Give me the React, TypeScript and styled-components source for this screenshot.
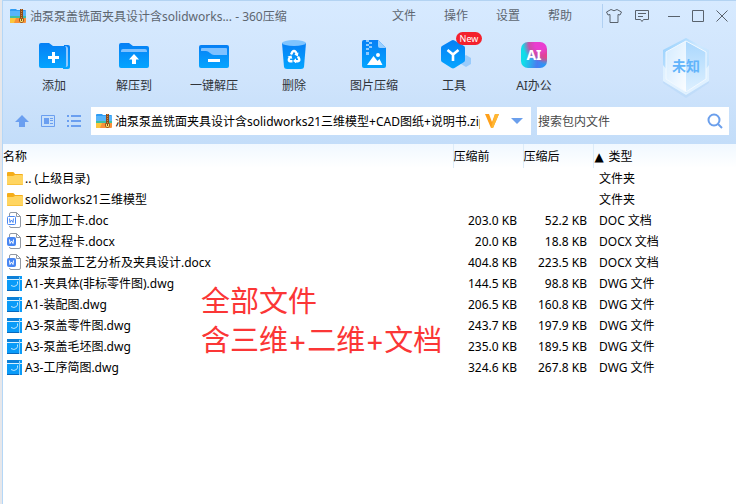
import React from "react";
import styled, { createGlobalStyle } from "styled-components";

const GlobalStyle = createGlobalStyle`
  * { box-sizing: border-box; }
  html, body { margin: 0; background: #e7e7ea; }
  body, button, input {
    font-family: "Noto Sans", "Noto Sans CJK SC", sans-serif;
    font-size: 12px;
  }
`;

const Window = styled.main`
  position: relative;
  display: flex;
  flex-direction: column;
  min-height: 100vh;
  margin-left: 2px;
  border-left: 1px solid #b4d7f7;
  background: #fff;
`;

const Header = styled.header`
  border-top: 1px solid #b3d3f2;
  background: linear-gradient(#d7eaff, #cfe4fc 55%, #c3ddf9);
`;

const TitleBar = styled.div`
  display: flex;
  align-items: center;
  height: 30px;
  padding: 0 6px 0 7px;
`;

const Title = styled.h1`
  flex: 1;
  min-width: 0;
  margin: 0 0 0 3px;
  padding-top: 1px;
  overflow: hidden;
  white-space: nowrap;
  font-size: 12px;
  font-weight: 400;
  line-height: 18px;
  color: #5d6670;
`;

const PlainButton = styled.button`
  display: flex;
  align-items: center;
  justify-content: center;
  padding: 0;
  border: 0;
  background: none;
  color: inherit;
  line-height: 18px;
`;

const Menu = styled.nav`
  display: flex;
  margin-right: 16px;
  color: #5d6670;
`;

const MenuButton = styled(PlainButton)`
  width: 52px;
`;

const WindowControls = styled.div`
  display: flex;
  align-items: center;
  height: 24px;
  padding-left: 3px;
  border-left: 1px solid #b0d0f2;
`;

const ControlButton = styled(PlainButton)<{ $gap?: number }>`
  width: 16px;
  height: 20px;
  margin-left: ${(p) => p.$gap ?? 8}px;
`;

const Toolbar = styled.div`
  display: flex;
  align-items: flex-start;
  justify-content: space-between;
  height: 76px;
  padding: 6px 26px 0 11px;
`;

const Tools = styled.div`
  display: flex;
`;

const ToolButton = styled(PlainButton)`
  position: relative;
  flex-direction: column;
  justify-content: flex-start;
  gap: 4px;
  width: 80px;
  color: #30343a;
`;

const NewBadge = styled.span`
  position: absolute;
  top: -5px;
  left: 42px;
  width: 26px;
  border-radius: 7px;
  background: #f4212d;
  color: #fff;
  font-size: 9px;
  line-height: 13px;
`;

const AiTile = styled.span`
  width: 26px;
  height: 26px;
  margin: 5px 0;
  border-radius: 7px;
  background:
    radial-gradient(circle at 75% 8%, #e93ed0 0 18%, #e0409cdd 38%, transparent 58%),
    radial-gradient(circle at 100% 45%, #f4476c 0 10%, transparent 38%),
    linear-gradient(100deg, #10dde9 20%, #4a7df0 65%, #1aa3fb);
  color: #fff;
  font-size: 14px;
  font-weight: 700;
  line-height: 26px;
`;

const StatusBadge = styled.div`
  display: grid;
  width: 48px;
  height: 62px;
  place-items: center;
  > * { grid-area: 1 / 1; }
`;

const StatusText = styled.span`
  padding-bottom: 4px;
  color: #62b4fb;
  font-size: 14px;
  font-weight: 700;
  line-height: 20px;
`;

const AddressBar = styled.div`
  display: flex;
  align-items: center;
  height: 37px;
  padding: 0 7px 9px 10px;
`;

const NavButton = styled(PlainButton)`
  width: 18px;
  height: 20px;
  margin-right: 8px;
`;

const Field = styled.div<{ $grow: number }>`
  display: flex;
  flex: ${(p) => p.$grow} 1 0;
  align-items: center;
  min-width: 0;
  height: 28px;
  background: #fff;
  & + & { margin-left: 6px; }
`;

const AddressIcon = styled.span`
  display: flex;
  margin-left: 5px;
`;

const TextInput = styled.input`
  flex: 1;
  min-width: 0;
  height: 28px;
  padding: 0 1px;
  border: 0;
  outline: 0;
  background: transparent;
  color: #000;
  &::placeholder { color: #484848; opacity: 1; }
`;

const AddressInput = styled(TextInput)`
  margin: 0 4px 0 1px;
`;

const ArrowButton = styled(PlainButton)`
  width: 32px;
  height: 28px;
  padding-left: 4px;
`;

const SearchButton = styled(PlainButton)`
  width: 28px;
  height: 28px;
`;

const FileTable = styled.table`
  width: 100%;
  table-layout: fixed;
  border-collapse: collapse;
  color: #000;
  line-height: 21px;
  white-space: nowrap;
`;

const HeadRow = styled.tr`
  height: 24px;
  background: linear-gradient(#f0f8ff, #fff);
`;

const HeadCell = styled.th<{ $divided?: boolean }>`
  padding: 0;
  border-left: ${(p) => (p.$divided ? "1px solid #dcecf9" : "0")};
  text-align: left;
  font-weight: 400;
`;

const SortMark = styled.span`
  display: inline-block;
  width: 15px;
  padding-left: 1px;
  font-family: "DejaVu Sans", sans-serif;
  line-height: 18px;
`;

const Cell = styled.td<{ $numeric?: boolean }>`
  height: 21px;
  padding: 0 6px;
  text-align: ${(p) => (p.$numeric ? "right" : "left")};
`;

const NameCell = styled(Cell)`
  padding: 0 0 0 4px;
`;

const FileName = styled.span`
  display: flex;
  align-items: center;
  gap: 1px;
  height: 21px;
`;

const Annotation = styled.p`
  position: absolute;
  top: 282px;
  left: 198px;
  margin: 0;
  color: #fb3636;
  font-family: Inter, "Noto Sans CJK SC", sans-serif;
  font-size: 29px;
  line-height: 39px;
  white-space: pre-line;
  pointer-events: none;
`;

const ZipIcon = () => (
  <svg width="17" height="16" viewBox="0 0 17 16" aria-hidden="true">
    <path d="M0 2q0-1 1-1h5l1 1h8q1 0 1 1v4H0z" fill="#2f9cf3" />
    <path d="M0 3h16v5H0z" fill="#56b4fa" />
    <path d="M0 8h16v2H0z" fill="#3fbfa0" />
    <path d="M0 10h16v4q0 1-1 1H1q-1 0-1-1z" fill="#f9913a" />
    <path d="M0 10h6l-2 5H1q-1 0-1-1z" fill="#fbc63c" />
    <path d="M10 1h3v9h-3z" fill="#8a4a1d" />
    <path d="M11.500 1v9" stroke="#d08a3e" strokeDasharray="1 1" />
    <path d="M9.500 10.500h4V13l-1 1.500h-2l-1-1.500z" fill="#fbe070" stroke="#9b5a1d" />
    <path d="M11.500 11v2" stroke="#7b4315" />
  </svg>
);

const BlueGradient = ({ id }: { id: string }) => (
  <defs>
    <linearGradient id={id} x1="0" y1="0" x2="0" y2="1">
      <stop offset="0" stopColor="#067ff5" />
      <stop offset="1" stopColor="#04a5ff" />
    </linearGradient>
  </defs>
);

const ToolSvg = ({ id, children }: { id: string; children: React.ReactNode }) => (
  <svg width="36" height="36" viewBox="0 0 36 36" aria-hidden="true">
    <BlueGradient id={id} />
    {children}
  </svg>
);

const AddIcon = () => (
  <ToolSvg id="g-add">
    <path d="M28 8h4q2 0 2 2v20q0 2-2 2h-5z" fill="url(#g-add)" />
    <path d="M29 9q3 0 3 3v16q0 2-3 2z" fill="#8fc9ff" />
    <path d="M3 8q0-2 2-2h8l4 3h11q2 0 2 2v18q0 2-2 2H5q-2 0-2-2z" fill="url(#g-add)" />
    <path d="M17.500 15v11M12 20.500h11" stroke="#fff" strokeWidth="3" />
  </ToolSvg>
);

const ExtractIcon = () => (
  <ToolSvg id="g-ext">
    <path d="M3 8q0-2 2-2h8l4 3h14q2 0 2 2v18q0 2-2 2H5q-2 0-2-2z" fill="url(#g-ext)" />
    <path d="M5 15v-1q0-2 2-2h22q2 0 2 2v1z" fill="#7fc1ff" />
    <path d="m18 17 5 5.500h-3V27h-4v-4.500h-3z" fill="#fff" />
  </ToolSvg>
);

const OneKeyIcon = () => (
  <ToolSvg id="g-one">
    <rect x="3" y="8" width="30" height="23" rx="2" fill="url(#g-one)" />
    <path d="M5 14v-2q0-1 1-1h24q1 0 1 1v6H18q-2 0-4-2-2-2-4-2z" fill="#7fc1ff" />
    <path d="M12 23.500h12" stroke="#fff" strokeWidth="3" />
  </ToolSvg>
);

const DeleteIcon = () => (
  <ToolSvg id="g-del">
    <path d="M6 6h24l-2 24q-.2 2-3 2H11q-2.800 0-3-2z" fill="url(#g-del)" />
    <ellipse cx="18" cy="6" rx="12" ry="3" fill="#7fc4ff" />
    <g fill="none" stroke="#fff" strokeWidth="2.400">
      <path d="m15 17.500 1.500-2.700q1.500-1.800 3 0l1.300 2" />
      <path d="m22 19.500 1.200 2.500q.6 2-1.500 2.300H19" />
      <path d="M16.500 24.300h-2q-2.300-.3-1.500-2.500l1.200-2" />
    </g>
    <path d="m22.500 15.500-.7 4-3.500-2zM20 21.300v5l-3-2.300zM11.500 19.500l4-1 .8 3.500z" fill="#fff" />
  </ToolSvg>
);

const ImageIcon = () => (
  <ToolSvg id="g-img">
    <path d="M6 5q0-2 2-2h14l8 8v18q0 2-2 2H8q-2 0-2-2z" fill="url(#g-img)" />
    <path d="M22 3v6q0 2 2 2h6z" fill="#9bd0ff" />
    <path d="M10 3h3v2h-3zM13 5h3v2h-3zM10 7h3v2h-3zM13 9h3v2h-3zM10 11h3v2h-3zM10 15h3v3h-3z" fill="#8fcaff" />
    <circle cx="22" cy="18" r="2" fill="#fff" />
    <path d="m11 28 6.500-9 4 5 2-2 3 6z" fill="#fff" />
  </ToolSvg>
);

const CubeIcon = () => (
  <ToolSvg id="g-cube">
    <path d="m30 18 5 3v6l-5 3-5-3v-6z" fill="#9acbfb" />
    <path d="M15.500 3.500q1.500-.9 3 0L28 9q1 .6 1 2v12q0 1.400-1 2l-9.500 6q-1.500.9-3 0L6 25q-1-.6-1-2V11q0-1.400 1-2z" fill="url(#g-cube)" />
    <path d="m11.500 13 5.500 4.500 5.500-4.500M17 17v7" fill="none" stroke="#fff" strokeWidth="2.600" />
  </ToolSvg>
);

const HexBadge = () => (
  <svg width="48" height="62" viewBox="0 0 48 62" aria-hidden="true">
    <defs>
      <linearGradient id="g-hex" x1="0" y1="0" x2="1" y2="1">
        <stop offset="0" stopColor="#8fcdfd" />
        <stop offset=".45" stopColor="#cfe9ff" />
        <stop offset="1" stopColor="#b5dcfd" />
      </linearGradient>
      <linearGradient id="g-hexl" x1="0" y1="0" x2="1" y2="1">
        <stop offset="0" stopColor="#d3ebff" />
        <stop offset="1" stopColor="#fbfdff" />
      </linearGradient>
      <linearGradient id="g-hexr" x1="0" y1="0" x2="0" y2="1">
        <stop offset="0" stopColor="#a9d7fd" />
        <stop offset="1" stopColor="#def0ff" />
      </linearGradient>
    </defs>
    <path d="m24 4 23 12v30L24 61 1 46V16z" fill="#a9d0f6" opacity=".35" />
    <path d="m24 1 23 12v31L24 58 1 44V13z" fill="url(#g-hex)" />
    <path d="M1 44V28L24 56l23-28v16L24 58z" fill="#e9f5ff" opacity=".8" />
    <path d="M24 4v51L4 42V15z" fill="url(#g-hexl)" />
    <path d="M24 4v51l20-13V15z" fill="url(#g-hexr)" />
    <path d="m24 4 20 11v27L24 55 4 42V15z" fill="none" stroke="#f2f9ff" />
  </svg>
);

const FolderIcon = () => (
  <svg width="17" height="14" viewBox="0 0 17 14" aria-hidden="true">
    <path d="M0 1q0-1 1-1h5q1 0 2 2h7q1 0 1 1v5H0z" fill="#f5ad19" />
    <path d="M0 4h6l2-1h7q1 0 1 1v8q0 1-1 1H1q-1 0-1-1z" fill="#ffd561" />
    <path d="M0 12q0 1 1 1h14q1 0 1-1z" fill="#f8c23d" />
  </svg>
);

const DocIcon = ({ outline }: { outline?: boolean }) => (
  <svg width="17" height="17" viewBox="0 0 17 17" aria-hidden="true">
    <path d="M2.500 4V2q0-1.500 1.500-1.500h5.500l4 4V14q0 1.500-1.500 1.500H4q-1.500 0-1.500-1.500M9.500.5v4h4" fill="#fff" stroke="#9299a3" />
    <rect x=".5" y="4.500" width="8" height="8" rx="1" fill={outline ? "#fff" : "#4786f3"} stroke="#4786f3" />
    <path d="m2.500 6.500.5 4 1.500-2.500L6 10.500l.5-4" fill="none" stroke={outline ? "#4786f3" : "#fff"} />
  </svg>
);

const DwgIcon = () => (
  <svg width="17" height="16" viewBox="0 0 17 16" aria-hidden="true">
    <path d="M0 0h15v15H0z" fill="#0a9bf8" />
    <path d="M0 0h12v3H0z" fill="#0d80d8" />
    <path d="M0 3.500h15" stroke="#d8f1ff" />
    <path d="M12.500 1v14" stroke="#8fd2fb" />
    <path d="M4 9.500q3 2 5.500 0 1.500-1.500 1-4" fill="none" stroke="#b9e6ff" />
    <path d="M0 14.500h12" stroke="#0868bd" />
  </svg>
);

const tools = [
  { label: "添加", icon: <AddIcon /> },
  { label: "解压到", icon: <ExtractIcon /> },
  { label: "一键解压", icon: <OneKeyIcon /> },
  { label: "删除", icon: <DeleteIcon /> },
  { label: "图片压缩", icon: <ImageIcon /> },
  { label: "工具", icon: <CubeIcon />, isNew: true },
  { label: "AI办公", icon: <AiTile>AI</AiTile> },
];

const files = [
  { icon: <FolderIcon />, name: ".. (上级目录)", before: "", after: "", type: "文件夹" },
  { icon: <FolderIcon />, name: "solidworks21三维模型", before: "", after: "", type: "文件夹" },
  { icon: <DocIcon outline />, name: "工序加工卡.doc", before: "203.0 KB", after: "52.2 KB", type: "DOC 文档" },
  { icon: <DocIcon />, name: "工艺过程卡.docx", before: "20.0 KB", after: "18.8 KB", type: "DOCX 文档" },
  { icon: <DocIcon />, name: "油泵泵盖工艺分析及夹具设计.docx", before: "404.8 KB", after: "223.5 KB", type: "DOCX 文档" },
  { icon: <DwgIcon />, name: "A1-夹具体(非标零件图).dwg", before: "144.5 KB", after: "98.8 KB", type: "DWG 文件" },
  { icon: <DwgIcon />, name: "A1-装配图.dwg", before: "206.5 KB", after: "160.8 KB", type: "DWG 文件" },
  { icon: <DwgIcon />, name: "A3-泵盖零件图.dwg", before: "243.7 KB", after: "197.9 KB", type: "DWG 文件" },
  { icon: <DwgIcon />, name: "A3-泵盖毛坯图.dwg", before: "235.0 KB", after: "189.5 KB", type: "DWG 文件" },
  { icon: <DwgIcon />, name: "A3-工序简图.dwg", before: "324.6 KB", after: "267.8 KB", type: "DWG 文件" },
];

const controlStroke = { fill: "none", stroke: "#59626c" };

export default function App() {
  return (
    <>
      <GlobalStyle />
      <Window>
        <Header>
          <TitleBar>
            <ZipIcon />
            <Title>油泵泵盖铣面夹具设计含solidworks... - 360压缩</Title>
            <Menu>
              {["文件", "操作", "设置", "帮助"].map((item) => (
                <MenuButton key={item}>{item}</MenuButton>
              ))}
            </Menu>
            <WindowControls>
              <ControlButton $gap={0} aria-label="皮肤">
                <svg width="16" height="14" viewBox="0 0 16 14" {...controlStroke}>
                  <path d="M5 .5q3 2.500 6 0L15.500 3 14 6l-2-.5v8H4v-8L2 6 .5 3z" />
                </svg>
              </ControlButton>
              <ControlButton $gap={12} aria-label="反馈">
                <svg width="14" height="14" viewBox="0 0 14 14" {...controlStroke}>
                  <path d="M.5 1.500h13v9H8.500L7 12.500l-1.500-2h-5zM3 4.500h8M3 7.500h5" />
                </svg>
              </ControlButton>
              <ControlButton $gap={16} aria-label="最小化">
                <svg width="12" height="12" viewBox="0 0 12 12" {...controlStroke}>
                  <path d="M0 6.500h12" />
                </svg>
              </ControlButton>
              <ControlButton aria-label="最大化">
                <svg width="12" height="12" viewBox="0 0 12 12" {...controlStroke}>
                  <path d="M.5.5h11v11H.5z" />
                </svg>
              </ControlButton>
              <ControlButton aria-label="关闭">
                <svg width="12" height="12" viewBox="0 0 12 12" {...controlStroke}>
                  <path d="m.5.5 11 11M11.500.5l-11 11" />
                </svg>
              </ControlButton>
            </WindowControls>
          </TitleBar>
          <Toolbar>
            <Tools>
              {tools.map((tool) => (
                <ToolButton key={tool.label}>
                  {tool.icon}
                  {tool.label}
                  {tool.isNew && <NewBadge>New</NewBadge>}
                </ToolButton>
              ))}
            </Tools>
            <StatusBadge>
              <HexBadge />
              <StatusText>未知</StatusText>
            </StatusBadge>
          </Toolbar>
          <AddressBar>
            <NavButton aria-label="向上">
              <svg width="14" height="12" viewBox="0 0 14 12">
                <path d="m7 0 7 7h-4v5H4V7H0z" fill="#6b9ff0" />
              </svg>
            </NavButton>
            <NavButton aria-label="预览">
              <svg width="14" height="12" viewBox="0 0 14 12" fill="none" stroke="#6b9ff0">
                <path d="M.5.5h13v11H.5z" />
                <path d="M3 3h5v6H3z" fill="#6b9ff0" stroke="none" />
                <path d="M9 3.500h3M9 5.500h3M9 8.500h3" />
              </svg>
            </NavButton>
            <NavButton aria-label="列表">
              <svg width="14" height="12" viewBox="0 0 14 12" stroke="#6b9ff0">
                <path d="M0 1h2M4 1h10M0 6h2M4 6h10M0 11h2M4 11h10" strokeWidth="2" />
              </svg>
            </NavButton>
            <Field $grow={440}>
              <AddressIcon>
                <ZipIcon />
              </AddressIcon>
              <AddressInput
                aria-label="路径"
                defaultValue="油泵泵盖铣面夹具设计含solidworks21三维模型+CAD图纸+说明书.zip"
              />
              <svg width="14" height="14" viewBox="0 0 14 14" aria-hidden="true">
                <path d="M0 0h4l3 8 3-8h4L8 14H6z" fill="#ffa01a" />
                <path d="M10 0h4L8 14H6z" fill="#ffb733" />
              </svg>
              <ArrowButton aria-label="历史路径">
                <svg width="12" height="6" viewBox="0 0 12 6">
                  <path d="M0 0h12L6 6z" fill="#6b9fec" />
                </svg>
              </ArrowButton>
            </Field>
            <Field $grow={192}>
              <TextInput aria-label="搜索包内文件" placeholder="搜索包内文件" />
              <SearchButton aria-label="搜索">
                <svg width="16" height="16" viewBox="0 0 16 16" fill="none" stroke="#6b9fec" strokeWidth="2">
                  <circle cx="7" cy="7" r="5.500" />
                  <path d="m11 11 4 4" />
                </svg>
              </SearchButton>
            </Field>
          </AddressBar>
        </Header>
        <FileTable>
          <colgroup>
            <col />
            <col width="70" />
            <col width="70" />
            <col width="143" />
          </colgroup>
          <thead>
            <HeadRow>
              <HeadCell>名称</HeadCell>
              <HeadCell $divided>压缩前</HeadCell>
              <HeadCell $divided>压缩后</HeadCell>
              <HeadCell $divided>
                <SortMark>▲</SortMark>类型
              </HeadCell>
            </HeadRow>
          </thead>
          <tbody>
            {files.map((file) => (
              <tr key={file.name}>
                <NameCell>
                  <FileName>
                    {file.icon}
                    {file.name}
                  </FileName>
                </NameCell>
                <Cell $numeric>{file.before}</Cell>
                <Cell $numeric>{file.after}</Cell>
                <Cell>{file.type}</Cell>
              </tr>
            ))}
          </tbody>
        </FileTable>
        <Annotation>{"全部文件\n含三维+二维+文档"}</Annotation>
      </Window>
    </>
  );
}
